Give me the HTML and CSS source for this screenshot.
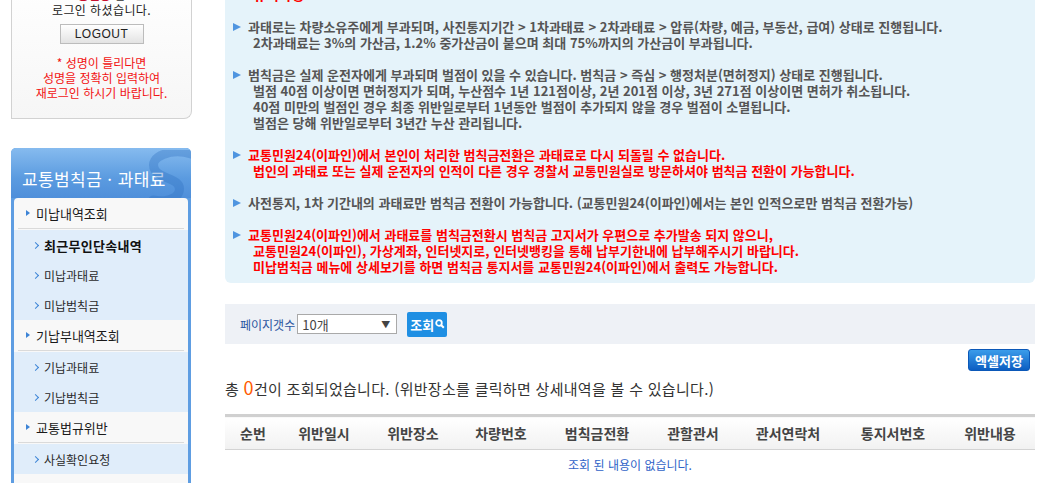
FILE: index.html
```html
<!DOCTYPE html>
<html lang="ko">
<head>
    <meta charset="UTF-8" />
    <title>교통범칙금 · 과태료 - 최근무인단속내역</title>
    <link rel="stylesheet" href="styles.css">
</head>
<body>
<div class="wrap">
    <div class="side">
        <div class="login-box">
            <p class="login-name"><strong>홍길동</strong> 님</p>
            <p class="login-msg">로그인 하셨습니다.</p>
            <button class="btn-logout">LOGOUT</button>
            <p class="login-warn">* 성명이 틀리다면<br>성명을 정확히 입력하여<br>재로그인 하시기 바랍니다.</p>
        </div>

        <div class="lnb">
            <div class="lnb-title">
                교통범칙금 · 과태료
                <svg class="lnb-deco" width="60" height="52" viewBox="0 0 60 52">
                    <path d="M58 4 C40 -2 14 6 22 20 C28 30 50 28 46 42 C43 50 30 52 20 50" fill="none" stroke="#2f6fc0" stroke-opacity="0.35" stroke-width="9" stroke-linecap="round"/>
                </svg>
            </div>
            <ul class="lnb-menu">
                <li>
                    <a class="d1 first">미납내역조회</a>
                    <ul class="d2">
                        <li><a class="on">최근무인단속내역</a></li>
                        <li><a>미납과태료</a></li>
                        <li><a>미납범칙금</a></li>
                    </ul>
                </li>
                <li>
                    <a class="d1">기납부내역조회</a>
                    <ul class="d2">
                        <li><a>기납과태료</a></li>
                        <li><a>기납범칙금</a></li>
                    </ul>
                </li>
                <li>
                    <a class="d1">교통법규위반</a>
                    <ul class="d2">
                        <li><a>사실확인요청</a></li>
                    </ul>
                </li>
                <li><a class="d1">이의신청</a></li>
            </ul>
        </div>
    </div>

    <div class="main">
        <div class="notice">
            <h3 class="notice-tit">유의사항</h3>
            <ul class="notice-list">
                <li>
                    <span class="arr"></span>
                    <div>
                        <p>과태로는 차량소유주에게 부과되며, 사진통지기간 &gt; 1차과태료 &gt; 2차과태료 &gt; 압류(차량, 예금, 부동산, 급여) 상태로 진행됩니다.</p>
                        <p class="ind">2차과태료는 3%의 가산금, 1.2% 중가산금이 붙으며 최대 75%까지의 가산금이 부과됩니다.</p>
                    </div>
                </li>
                <li>
                    <span class="arr"></span>
                    <div>
                        <p>범칙금은 실제 운전자에게 부과되며 벌점이 있을 수 있습니다. 범칙금 &gt; 즉심 &gt; 행정처분(면허정지) 상태로 진행됩니다.</p>
                        <p class="ind">벌점 40점 이상이면 면허정지가 되며, 누산점수 1년 121점이상, 2년 201점 이상, 3년 271점 이상이면 면허가 취소됩니다.</p>
                        <p class="ind">40점 미만의 벌점인 경우 최종 위반일로부터 1년동안 벌점이 추가되지 않을 경우 벌점이 소멸됩니다.</p>
                        <p class="ind">벌점은 당해 위반일로부터 3년간 누산 관리됩니다.</p>
                    </div>
                </li>
                <li class="red">
                    <span class="arr"></span>
                    <div>
                        <p>교통민원24(이파인)에서 본인이 처리한 범칙금전환은 과태료로 다시 되돌릴 수 없습니다.</p>
                        <p class="ind">법인의 과태료 또는 실제 운전자의 인적이 다른 경우 경찰서 교통민원실로 방문하셔야 범칙금 전환이 가능합니다.</p>
                    </div>
                </li>
                <li>
                    <span class="arr"></span>
                    <div>
                        <p>사전통지, 1차 기간내의 과태료만 범칙금 전환이 가능합니다. (교통민원24(이파인)에서는 본인 인적으로만 범칙금 전환가능)</p>
                    </div>
                </li>
                <li class="red">
                    <span class="arr"></span>
                    <div>
                        <p>교통민원24(이파인)에서 과태료를 범칙금전환시 범칙금 고지서가 우편으로 추가발송 되지 않으니,</p>
                        <p class="ind">교통민원24(이파인), 가상계좌, 인터넷지로, 인터넷뱅킹을 통해 납부기한내에 납부해주시기 바랍니다.</p>
                        <p class="ind">미납범칙금 메뉴에 상세보기를 하면 범칙금 통지서를 교통민원24(이파인)에서 출력도 가능합니다.</p>
                    </div>
                </li>
            </ul>
        </div>

        <div class="search-bar">
            <label class="search-label">페이지갯수</label>
            <div class="select"><span>10개</span><span class="caret">▼</span></div>
            <button class="btn-search">조회<svg width="10" height="10" viewBox="0 0 10 10"><circle cx="4" cy="4" r="2.8" fill="none" stroke="#fff" stroke-width="1.8"/><path d="M6 6 L8.8 8.8" stroke="#fff" stroke-width="2"/></svg></button>
        </div>

        <div class="btn-row">
            <button class="btn-excel">엑셀저장</button>
        </div>

        <p class="total">총 <em>0</em>건이 조회되었습니다. (위반장소를 클릭하면 상세내역을 볼 수 있습니다.)</p>

        <table class="list">
            <colgroup>
                <col style="width:56px"><col style="width:86px"><col style="width:92px">
                <col style="width:84px"><col style="width:108px"><col style="width:84px">
                <col style="width:106px"><col style="width:104px"><col style="width:90px">
            </colgroup>
            <thead>
                <tr>
                    <th>순번</th><th>위반일시</th><th>위반장소</th><th>차량번호</th><th>범칙금전환</th>
                    <th>관할관서</th><th>관서연락처</th><th>통지서번호</th><th>위반내용</th>
                </tr>
            </thead>
            <tbody>
                <tr><td colspan="9" class="empty">조회 된 내용이 없습니다.</td></tr>
            </tbody>
        </table>
    </div>
</div>
</body>
</html>
```

FILE: styles.css
```css
* {
    box-sizing: border-box;
}

body {
    margin: 0;
    font-family: "Noto Sans CJK KR", "Noto Sans", sans-serif;
    font-size: 12px;
    color: #333;
    background: #fff;
    overflow: hidden;
}

p, ul, h3 {
    margin: 0;
    padding: 0;
}

ul {
    list-style: none;
}

a {
    color: inherit;
    text-decoration: none;
}

.wrap {
    display: flex;
    gap: 33px;
    margin-top: -24px;
    padding-left: 11px;
}

.side {
    width: 181px;
    flex: none;
}

.main {
    width: 810px;
    flex: none;
}

/* login */
.login-box {
    border: 1px solid #d2d2d2;
    border-top: 0;
    border-radius: 0 0 8px 0;
    background: linear-gradient(#fff, #f6f6f6);
    text-align: center;
    padding: 11px 0 18px;
    line-height: 15px;
}

    .login-name strong {
        color: #c8102e;
    }

    .login-msg {
        color: #222;
        letter-spacing: 0.4px;
    }

.btn-logout {
    display: block;
    width: 84px;
    height: 20px;
    margin: 7px auto 0;
    padding: 0;
    border: 1px solid #bcbcbc;
    background: linear-gradient(#fff, #e3e3e3);
    font-family: "Liberation Sans", sans-serif;
    font-size: 12px;
    letter-spacing: 0.5px;
    color: #222;
}

.login-warn {
    margin-top: 11px;
    color: #f21212;
}

/* left menu */
.lnb {
    margin-top: 29px;
    width: 180px;
    background: #5e9de2;
    border-radius: 5px 5px 0 0;
    padding: 0 3px;
}

.lnb-title {
    position: relative;
    overflow: hidden;
    height: 50px;
    margin: 0 -3px;
    padding: 21px 0 0 11px;
    border-radius: 5px 5px 0 0;
    background: linear-gradient(#86bbef, #5b9be0 60%, #4f8fda);
    color: #fff;
    font-size: 17px;
    letter-spacing: 0.4px;
    line-height: 20px;
}

.lnb-deco {
    position: absolute;
    right: -2px;
    top: 2px;
}

.d1 {
    display: flex;
    align-items: center;
    height: 32px;
    padding: 0 0 2px 12px;
    background: #f8f8f8 linear-gradient(#dadada, #dadada) no-repeat 4px 30px / calc(100% - 8px) 1px;
    font-size: 13px;
    color: #1a1a1a;
}

    .d1.first {
        border-radius: 4px 4px 0 0;
    }

    .d1::before {
        content: "";
        width: 0;
        height: 0;
        border-left: 4px solid #3d84d6;
        border-top: 3px solid transparent;
        border-bottom: 3px solid transparent;
        margin-right: 6px;
    }

.d2 {
    background: #e0edfa;
}

    .d2 a {
        display: flex;
        align-items: center;
        height: 30px;
        padding-left: 19px;
        font-size: 12px;
        color: #2a2a2a;
    }

        .d2 a::before {
            content: "";
            width: 4px;
            height: 4px;
            border-top: 1px solid #3d84d6;
            border-right: 1px solid #3d84d6;
            transform: rotate(45deg);
            margin-right: 6px;
        }

        .d2 a.on {
            font-size: 13px;
            font-weight: bold;
            color: #111;
            letter-spacing: 0.3px;
        }

/* notice */
.notice {
    background: #e5f3fa;
    border-radius: 0 0 6px 6px;
    padding: 8px 10px 8px 8px;
}

.notice-tit {
    margin: 0 0 15px 20px;
    font-size: 14px;
    line-height: 20px;
    color: #f00;
}

.notice-list {
    font-size: 13px;
    font-weight: bold;
    line-height: 16px;
    color: #555;
    white-space: nowrap;
}

    .notice-list li {
        display: flex;
        margin-bottom: 16px;
    }

        .notice-list li:last-child {
            margin-bottom: 0;
        }

        .notice-list li.red {
            color: #f00;
        }

    .notice-list .arr {
        flex: none;
        width: 0;
        height: 0;
        margin: 4px 7px 0 0;
        border-left: 8px solid #4f95e0;
        border-top: 4px solid transparent;
        border-bottom: 4px solid transparent;
    }

    .notice-list .ind {
        padding-left: 5px;
    }

/* search */
.search-bar {
    display: flex;
    align-items: center;
    height: 40px;
    margin-top: 21px;
    padding-left: 15px;
    background: #eef1f6;
}

.search-label {
    font-size: 12px;
    color: #2b56a0;
    margin-right: 2px;
}

.select {
    display: flex;
    align-items: center;
    justify-content: space-between;
    width: 100px;
    height: 20px;
    padding: 0 6px 0 4px;
    border: 1px solid #a9a9a9;
    background: #fff;
    font-size: 13px;
    color: #444;
}

    .select .caret {
        font-size: 9px;
        color: #444;
    }

.btn-search {
    display: flex;
    align-items: center;
    gap: 1px;
    height: 25px;
    width: 40px;
    margin: 0 0 0 10px;
    padding: 0 0 0 3px;
    border: 0;
    border-radius: 2px;
    background: #1f8fe3;
    color: #fff;
    font-family: inherit;
    font-size: 13px;
    font-weight: bold;
}

.btn-row {
    display: flex;
    justify-content: flex-end;
    margin-top: 5px;
    padding-right: 5px;
}

.btn-excel {
    width: 62px;
    height: 22px;
    padding: 0;
    border: 1px solid #0b58b8;
    border-radius: 3px;
    background: linear-gradient(#3b9cea, #0c5ec2);
    color: #fff;
    font-family: inherit;
    font-size: 13px;
    font-weight: bold;
}

.total {
    margin-top: 6px;
    font-size: 15px;
    line-height: 20px;
    letter-spacing: 0.3px;
    color: #333;
}

    .total em {
        font-style: normal;
        font-size: 18px;
        color: #ff5a00;
    }

/* table */
.list {
    width: 810px;
    margin-top: 15px;
    border-collapse: collapse;
    table-layout: fixed;
    border-top: 3px solid #d0d0d0;
}

    .list th {
        height: 34px;
        padding: 0;
        background: linear-gradient(#fff, #f1f1f1);
        border-bottom: 1px solid #d3d3d3;
        font-size: 14px;
        color: #444;
    }

    .list td.empty {
        height: 30px;
        text-align: center;
        font-size: 12px;
        color: #2f62c7;
    }
```
